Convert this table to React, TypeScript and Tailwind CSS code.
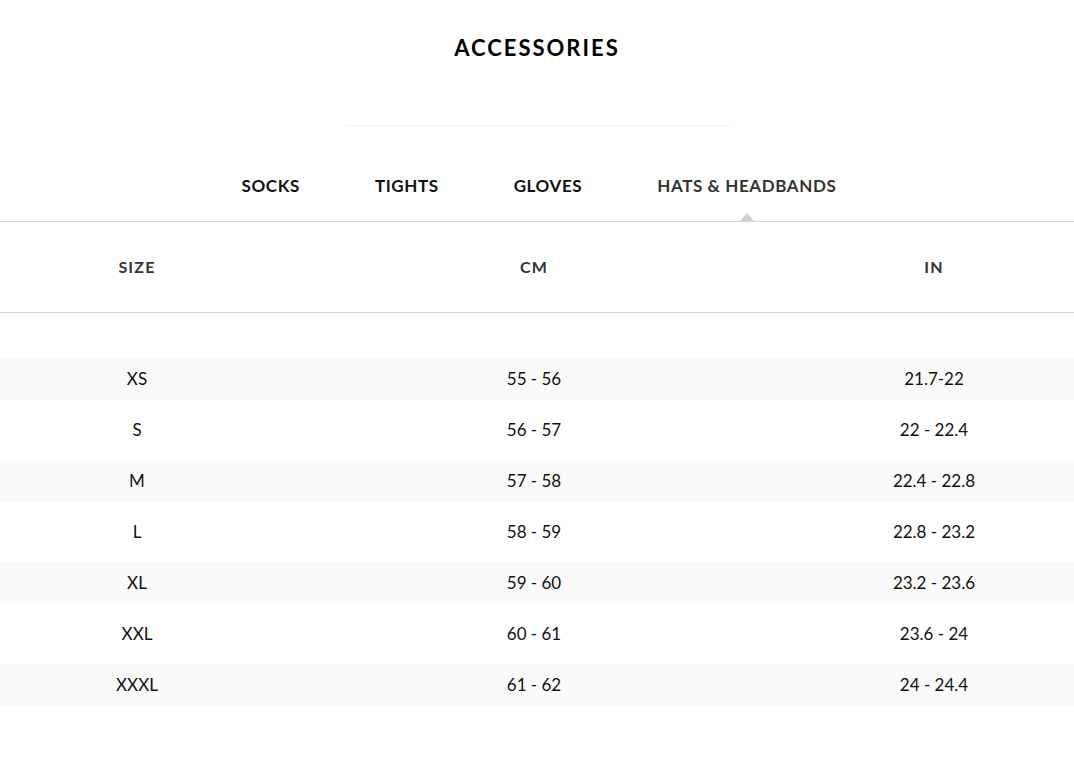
import React from 'react';

const tabs = ['SOCKS', 'TIGHTS', 'GLOVES', 'HATS & HEADBANDS'];

const rows: [string, string, string][] = [
  ['XS', '55 - 56', '21.7-22'],
  ['S', '56 - 57', '22 - 22.4'],
  ['M', '57 - 58', '22.4 - 22.8'],
  ['L', '58 - 59', '22.8 - 23.2'],
  ['XL', '59 - 60', '23.2 - 23.6'],
  ['XXL', '60 - 61', '23.6 - 24'],
  ['XXXL', '61 - 62', '24 - 24.4'],
];

export default function App() {
  const active = 'HATS & HEADBANDS';

  return (
    <div className="min-h-[766px] w-full bg-white font-['Lato','Liberation_Sans',sans-serif] text-[#111]">
      {/* Titre */}
      <h1 className="pt-[35px] text-center text-[22px] font-bold leading-[26px] tracking-[2px] text-black">
        ACCESSORIES
      </h1>

      <div className="mx-auto mt-[64px] h-px w-[383px] bg-[#f2f2f2]" />

      {/* Onglets */}
      <nav className="mt-[49px] flex justify-center gap-[75px] pl-[4px]">
        {tabs.map((tab) => {
          const isActive = tab === active;
          return (
            <div key={tab} className="relative h-[46px]">
              <span
                className={`block text-[17px] font-bold leading-[22px] tracking-[0.6px] ${
                  isActive ? 'text-[#333]' : 'text-[#111]'
                }`}
              >
                {tab}
              </span>
              {isActive && (
                <span className="absolute bottom-0 left-1/2 h-0 w-0 -translate-x-1/2 border-x-[7px] border-b-[8px] border-x-transparent border-b-[#d0d0d0]" />
              )}
            </div>
          );
        })}
      </nav>

      {/* Tableau */}
      <div className="border-t border-[#d6d6d6]">
        <div className="grid h-[91px] grid-cols-[274px_520px_1fr] items-center border-b border-[#d6d6d6] text-[16px] font-bold tracking-[1.2px] text-[#333]">
          <div className="text-center">SIZE</div>
          <div className="text-center">CM</div>
          <div className="text-center">IN</div>
        </div>

        <div className="mt-[45px] flex flex-col gap-[9px]">
          {rows.map(([size, cm, inch], i) => (
            <div
              key={size}
              className={`grid h-[42px] grid-cols-[274px_520px_1fr] items-center text-[17px] text-[#111] ${
                i % 2 === 0 ? 'bg-[#fafafa]' : 'bg-white'
              }`}
            >
              <div className="text-center">{size}</div>
              <div className="text-center">{cm}</div>
              <div className="text-center">{inch}</div>
            </div>
          ))}
        </div>
      </div>
    </div>
  );
}
